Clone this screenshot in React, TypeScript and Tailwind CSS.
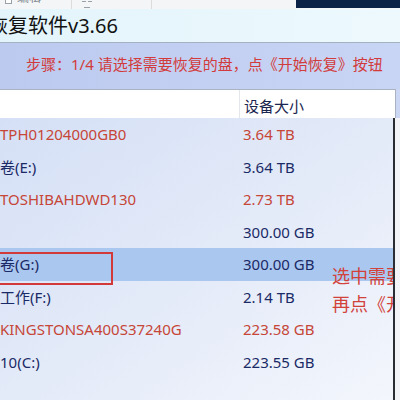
import React from "react";

const rows = [
  { name: "TPH01204000GB0", size: "3.64 TB", red: true },
  { name: "卷(E:)", size: "3.64 TB", red: false },
  { name: "TOSHIBAHDWD130", size: "2.73 TB", red: true },
  { name: "", size: "300.00 GB", red: false },
  { name: "卷(G:)", size: "300.00 GB", red: false, sel: true },
  { name: "工作(F:)", size: "2.14 TB", red: false },
  { name: "KINGSTONSA400S37240G", size: "223.58 GB", red: true },
  { name: "10(C:)", size: "223.55 GB", red: false },
];

export default function App() {
  return (
    <div
      className="w-[400px] h-[400px] overflow-hidden flex flex-col bg-white"
      style={{ fontFamily: '"Noto Sans", "Noto Sans CJK SC", sans-serif' }}
    >
      {/* top toolbar strip */}
      <div className="h-[9px] shrink-0 flex bg-[#f4f5f6] overflow-hidden">
        <div className="w-[72px] border-r border-[#dcdcdc] relative">
          <div className="absolute left-[5px] top-[-4px] w-[7px] h-[8px] border border-[#9aa0a8] bg-white" />
          <div className="absolute left-[17px] top-[-9px] text-[12px] leading-[14px] text-[#808890]">编辑</div>
        </div>
        <div className="w-[80px] border-r border-[#dcdcdc] relative">
          <div className="absolute left-[10px] top-[1px] w-[4px] h-px bg-[#9aa0a8]" />
          <div className="absolute left-[16px] top-[1px] w-[4px] h-px bg-[#9aa0a8]" />
          <div className="absolute left-[12px] top-[7px] w-[6px] h-px bg-[#9aa0a8]" />
        </div>
        <div className="w-[144px]" />
        <div className="flex-1 h-[8px] bg-[#0b2347]" />
      </div>

      {/* title bar */}
      <div className="h-[34px] shrink-0 bg-gradient-to-r from-[#e3f4fb] to-[#edf9fd] border-b border-[#a3b1c2] flex items-center overflow-hidden">
        <div className="ml-[-12px] text-[20px] leading-none text-[#111] whitespace-nowrap">恢复软件v3.66</div>
      </div>

      {/* step band */}
      <div className="h-[46px] shrink-0 bg-gradient-to-r from-[#bccaf0] to-[#c9d5f4] flex items-center pl-[26px] pb-[4px]">
        <div className="text-[15px] leading-none text-[#d23b3b] whitespace-nowrap">
          步骤：1/4 请选择需要恢复的盘，点《开始恢复》按钮
        </div>
      </div>

      {/* table header */}
      <div className="h-[29px] shrink-0 flex bg-gradient-to-r from-[#c4d1f2] to-[#ccd7f4]">
        <div className="w-[396px] flex bg-white border-t border-r border-[#a9b3c2]">
          <div className="w-[240px] border-r border-[#e3e6ea]" />
          <div className="flex-1 flex items-center pl-[4px] pt-[5px] text-[15px] text-[#1b2650]">设备大小</div>
        </div>
      </div>

      {/* table body */}
      <div className="flex-1 flex bg-[#f2f4fa]">
        <div className="w-[393px] shrink-0 relative overflow-hidden bg-gradient-to-br from-[#d5e0f6] via-[#e3eaf8] to-[#f3f6fc]">
          {rows.map((r, i) => (
            <div
              key={i}
              className={`h-[32.5px] flex items-center text-[15px] whitespace-nowrap ${
                r.sel ? "bg-[#aac7ef]" : ""
              } ${r.red ? "text-[#c64638]" : "text-[#1a2a66]"}`}
            >
              <div className="w-[243px] pl-0">{r.name}</div>
              <div className="flex-1">{r.size}</div>
            </div>
          ))}
          {/* red box */}
          <div className="absolute left-[-3px] top-[134px] w-[116px] h-[33px] border-2 border-[#d23a3a]" />
          {/* annotation */}
          <div className="absolute left-[332px] top-[144px] text-[18px] leading-[28px] text-[#d2423a] whitespace-nowrap">
            <div>选中需要恢复的盘</div>
            <div>再点《开始恢复》</div>
          </div>
        </div>
        <div className="w-[2px] shrink-0 bg-[#2a2d33]" />
        <div className="flex-1 bg-[#f3f4f7]" />
      </div>
    </div>
  );
}
